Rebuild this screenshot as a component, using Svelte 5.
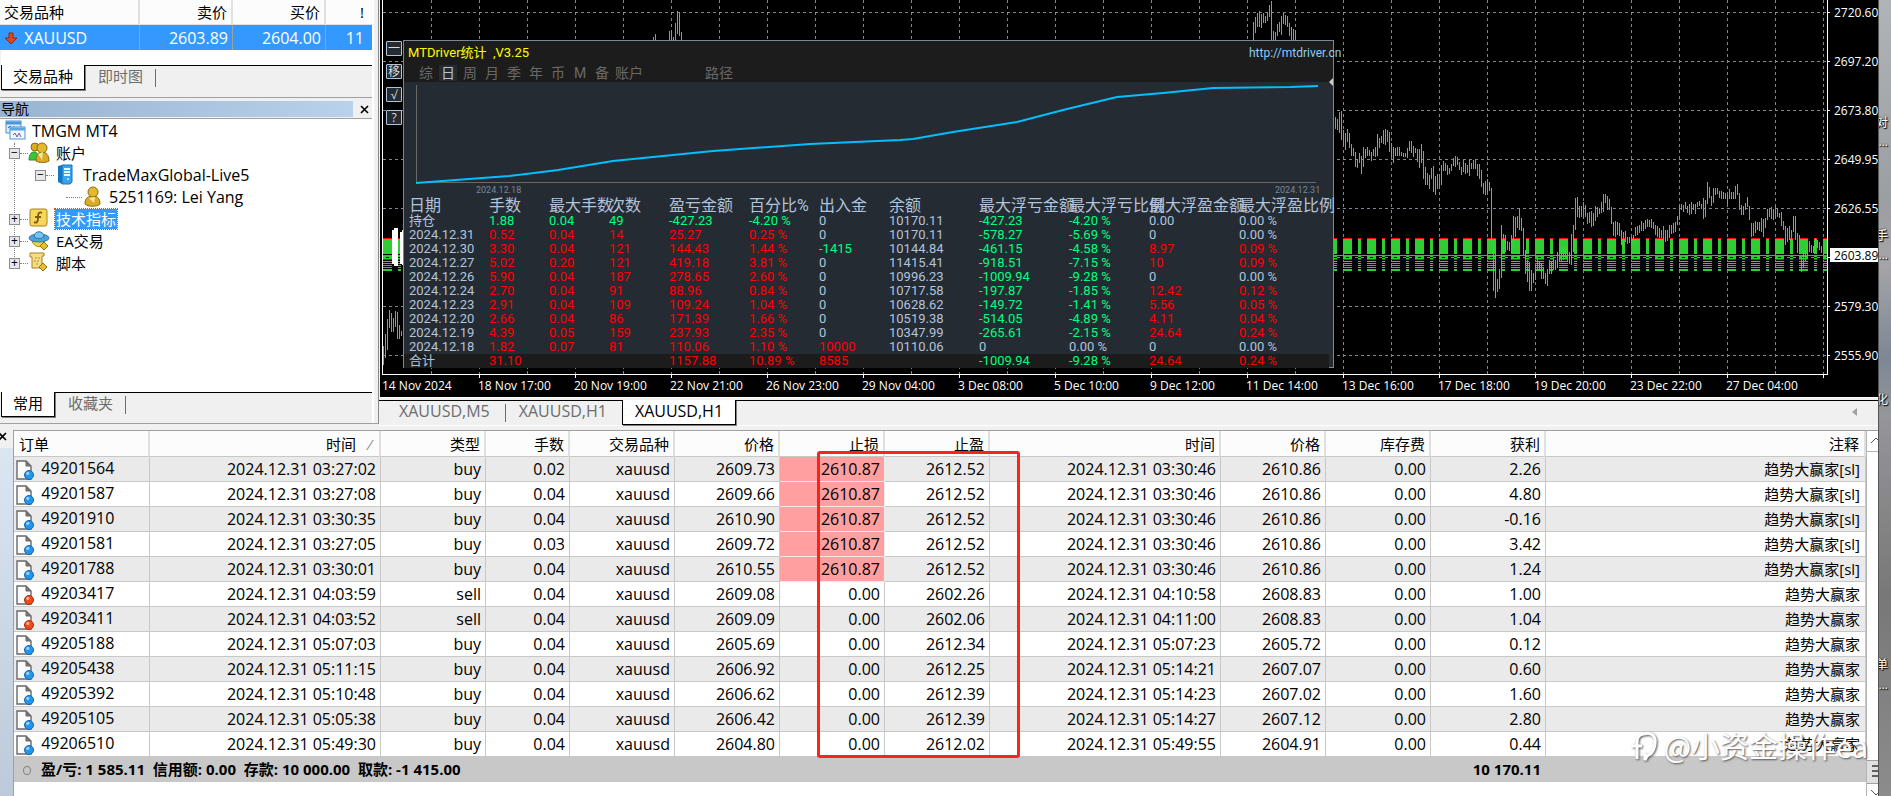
<script lang="ts">
	type Cell = string;

	const tree = [
		{ level: 0, icon: 'terminal', label: 'TMGM MT4', sign: '' },
		{ level: 1, icon: 'users', label: '账户', sign: '−' },
		{ level: 2, icon: 'server', label: 'TradeMaxGlobal-Live5', sign: '−' },
		{ level: 3, icon: 'user', label: '5251169: Lei Yang', sign: '' },
		{ level: 1, icon: 'func', label: '技术指标', sign: '+', selected: true },
		{ level: 1, icon: 'expert', label: 'EA交易', sign: '+' },
		{ level: 1, icon: 'script', label: '脚本', sign: '+' }
	];

	const times = [
		'14 Nov 2024', '18 Nov 17:00', '20 Nov 19:00', '22 Nov 21:00', '26 Nov 23:00',
		'29 Nov 04:00', '3 Dec 08:00', '5 Dec 10:00', '9 Dec 12:00', '11 Dec 14:00',
		'13 Dec 16:00', '17 Dec 18:00', '19 Dec 20:00', '23 Dec 22:00', '27 Dec 04:00'
	];
	const prices = ['2720.60', '2697.20', '2673.80', '2649.95', '2626.55', '', '2579.30', '2555.90'];
	const gridX = Array.from({ length: 30 }, (_, i) => 51 + i * 48);
	const gridY = prices.map((_, i) => 12 + i * 49);
	const orderLines = [256, 258, 261, 263, 265, 267, 269, 270];

	// high-low pairs, one bar every two pixels from x
	const series = [
		{ x: 3, bars: '346-365 334-358 319-350 310-328 313-332 318-332 311-327 312-339 325-339 331-336' },
		{ x: 273, bars: '37-40 34-40' },
		{ x: 289, bars: '31-40 30-40 37-40 23-40 11-34 12-36 32-40' },
		{ x: 873, bars: '22-40 17-33 13-27 11-27 14-28 13-23 16-23 13-21 5-17 1-40 31-40 32-40 24-36 22-32 16-35 13-24 15-25 16-27 23-36 27-40 29-40 30-40' },
		{
			x: 955,
			bars:
				'117-129 119-130 112-133 111-140 130-146 133-150 129-142 133-148 144-156 148-156 152-167 159-168 153-163 156-174 147-167 149-158 147-156 150-156 ' +
				'152-161 149-156 147-157 134-156 138-148 136-143 130-144 129-145 130-142 132-152 143-157 147-163 148-156 147-156 147-156 152-156 153-157 153-157 ' +
				'148-158 141-151 141-153 146-157 148-153 149-162 149-168 144-163 151-179 167-185 173-185 175-189 168-179 166-192 176-195 174-189 177-188 165-185 ' +
				'161-171 163-171 165-175 168-174 164-171 158-166 156-167 157-165 162-170 167-175 160-172 163-174 165-173 160-176 163-169 160-169 160-169 164-176 ' +
				'164-179 170-187 183-194 181-195 179-192 182-191 188-245 239-291 244-298 279-292 269-289 225-278 234-253 235-252 241-250 242-251 235-253 216-246 ' +
				'217-237 216-228 208-230 218-231 228-255 250-274 260-282 262-291 270-291 273-283 265-280 258-270 261-270 264-279 268-279 273-284 269-286 260-274 ' +
				'261-274 258-270 260-270 252-268 246-262 247-262 248-260 247-257 247-262 252-264 234-265 225-252 198-230 197-217 206-218 206-217 202-218 205-217 ' +
				'213-224 212-223 211-227 213-226 206-221 207-217 208-214 202-213 194-212 194-203 196-210 199-210 207-224 222-236 221-237 222-235 223-236 230-245 ' +
				'232-247 231-242 237-244 237-243 237-245 235-243 227-236 226-235 225-233 221-231 223-231 220-229 219-227 220-227 219-228 222-229 225-235 226-237 ' +
				'228-238 230-238 226-239 230-242 230-241 225-238 225-234 223-233 222-232 216-225 205-220 204-210 205-212 202-209 206-213 204-215 202-214 204-210 ' +
				'204-214 202-207 201-206 204-209 198-219 200-217 182-204 187-198 196-206 188-203 188-195 188-194 191-198 191-199 192-199 193-199 194-204 189-199 ' +
				'192-199 192-199 186-199 184-195 193-210 205-215 206-215 203-210 197-207 206-220 223-237 223-236 221-233 222-230 222-231 218-232 219-237 218-228 ' +
				'209-220 209-217 207-219 209-220 205-218 208-217 213-218 212-226 221-230 226-245 228-242 226-240 230-240 216-232 216-240 233-253 235-254 255-272 ' +
				'251-267 250-262 246-257 241-252 245-253 246-253 238-252 240-248 242-250 246-253'
		}
	];

	const candles = series
		.map((s) =>
			s.bars
				.split(' ')
				.map((b, i) => {
					const [high, low] = b.split('-');
					return `M${s.x + i * 2} ${high}V${low}`;
				})
				.join('')
		)
		.join('');

	const statTabs = ['综', '日', '周', '月', '季', '年', '币', 'M', '备', '账户'];
	const statHead = [
		'日期', '手数', '最大手数', '次数', '盈亏金额', '百分比%', '出入金', '余额',
		'最大浮亏金额', '最大浮亏比例', '最大浮盈金额', '最大浮盈比例'
	];
	const statRows: Cell[][] = [
		['持仓', '1.88', '0.04', '49', '-427.23', '-4.20 %', '0', '10170.11', '-427.23', '-4.20 %', '0.00', '0.00 %'],
		['2024.12.31', '0.52', '0.04', '14', '25.27', '0.25 %', '0', '10170.11', '-578.27', '-5.69 %', '0', '0.00 %'],
		['2024.12.30', '3.30', '0.04', '121', '144.43', '1.44 %', '-1415', '10144.84', '-461.15', '-4.58 %', '8.97', '0.09 %'],
		['2024.12.27', '5.02', '0.20', '121', '419.18', '3.81 %', '0', '11415.41', '-918.51', '-7.15 %', '10', '0.09 %'],
		['2024.12.26', '5.90', '0.04', '187', '278.65', '2.60 %', '0', '10996.23', '-1009.94', '-9.28 %', '0', '0.00 %'],
		['2024.12.24', '2.70', '0.04', '91', '88.96', '0.84 %', '0', '10717.58', '-197.87', '-1.85 %', '12.42', '0.12 %'],
		['2024.12.23', '2.91', '0.04', '109', '109.24', '1.04 %', '0', '10628.62', '-149.72', '-1.41 %', '5.56', '0.05 %'],
		['2024.12.20', '2.66', '0.04', '86', '171.39', '1.66 %', '0', '10519.38', '-514.05', '-4.89 %', '4.11', '0.04 %'],
		['2024.12.19', '4.39', '0.05', '159', '237.93', '2.35 %', '0', '10347.99', '-265.61', '-2.15 %', '24.64', '0.24 %'],
		['2024.12.18', '1.82', '0.07', '81', '110.06', '1.10 %', '10000', '10110.06', '0', '0.00 %', '0', '0.00 %'],
		['合计', '31.10', '', '', '1157.88', '10.89 %', '8585', '', '-1009.94', '-9.28 %', '24.64', '0.24 %']
	];

	function tone(value: string, col: number, row: number) {
		if (col === 0 || col === 7) return '';
		if (value.startsWith('-') || (row === 0 && col < 4)) return 'down';
		return parseFloat(value) > 0 ? 'up' : '';
	}

	const orderHead = ['订单', '时间', '类型', '手数', '交易品种', '价格', '止损', '止盈', '时间', '价格', '库存费', '获利', '注释'];
	const day = '2024.12.31 ';
	const orders = [
		['49201564', '03:27:02', 'buy', '0.02', '2609.73', '2610.87', '2612.52', '03:30:46', '2610.86', '2.26'],
		['49201587', '03:27:08', 'buy', '0.04', '2609.66', '2610.87', '2612.52', '03:30:46', '2610.86', '4.80'],
		['49201910', '03:30:35', 'buy', '0.04', '2610.90', '2610.87', '2612.52', '03:30:46', '2610.86', '-0.16'],
		['49201581', '03:27:05', 'buy', '0.03', '2609.72', '2610.87', '2612.52', '03:30:46', '2610.86', '3.42'],
		['49201788', '03:30:01', 'buy', '0.04', '2610.55', '2610.87', '2612.52', '03:30:46', '2610.86', '1.24'],
		['49203417', '04:03:59', 'sell', '0.04', '2609.08', '0.00', '2602.26', '04:10:58', '2608.83', '1.00'],
		['49203411', '04:03:52', 'sell', '0.04', '2609.09', '0.00', '2602.06', '04:11:00', '2608.83', '1.04'],
		['49205188', '05:07:03', 'buy', '0.04', '2605.69', '0.00', '2612.34', '05:07:23', '2605.72', '0.12'],
		['49205438', '05:11:15', 'buy', '0.04', '2606.92', '0.00', '2612.25', '05:14:21', '2607.07', '0.60'],
		['49205392', '05:10:48', 'buy', '0.04', '2606.62', '0.00', '2612.39', '05:14:23', '2607.02', '1.60'],
		['49205105', '05:05:38', 'buy', '0.04', '2606.42', '0.00', '2612.39', '05:14:27', '2607.12', '2.80'],
		['49206510', '05:49:30', 'buy', '0.04', '2604.80', '0.00', '2612.02', '05:49:55', '2604.91', '0.44']
	];
</script>

<div class="screen">
	<main class="app">
		<div class="top">
			<aside class="side">
				<table class="quotes">
					<thead>
						<tr><th>交易品种</th><th>卖价</th><th>买价</th><th>!</th></tr>
					</thead>
					<tbody>
						<tr>
							<td>
								<svg width="14" height="14" viewBox="0 0 14 14"><path d="M5 1h4v5h4l-6 6-6-6h4z" fill="#e8441c" stroke="#8c2410" /></svg>
								XAUUSD
							</td>
							<td>2603.89</td><td>2604.00</td><td>11</td>
						</tr>
					</tbody>
				</table>
				<div class="tabs quote-tabs">
					<button class="tab active">交易品种</button>
					<button class="tab">即时图</button>
				</div>
				<div class="nav-title">
					<span>导航</span>
					<button class="close" aria-label="关闭">
						<svg width="9" height="9" viewBox="0 0 9 9"><path d="M1 1l7 7M8 1L1 8" stroke="#000" stroke-width="1.6" /></svg>
					</button>
				</div>
				<ul class="tree">
					{#each tree as node}
						<li class="l{node.level}">
							{#if node.sign}<span class="box">{node.sign}</span><i class="dots"></i>{/if}
							{#if node.level === 3}<i class="dots long"></i>{/if}
							<svg width="22" height="22" viewBox="0 0 22 22">
								{#if node.icon === 'terminal'}
									<rect x="1" y="1" width="15" height="12" fill="#dcebfa" stroke="#4b96d8" />
									<path d="M1 3h15" stroke="#4b96d8" stroke-width="3" />
									<path d="M3 8l2-2 2 3 2-3" fill="none" stroke="#2d62b0" />
									<rect x="5" y="7" width="15" height="12" fill="#f2f8ff" stroke="#4b96d8" />
									<path d="M5 9h15" stroke="#5aa6e4" stroke-width="3" />
									<path d="M8 15l2-2 2 4 2-4 2 4" fill="none" stroke="#6b58b8" />
								{:else if node.icon === 'users'}
									<path d="M1 18c0-5 2-8 5-8s5 3 5 8z" fill="#35c93a" stroke="#268a28" />
									<circle cx="7" cy="5" r="4" fill="#d9ac20" stroke="#8c6b10" />
									<path d="M8 19c0-6 2-9 6-9s7 3 7 9c-3 2-10 2-13 0z" fill="#d9ac28" stroke="#8c6b10" />
									<circle cx="14" cy="6" r="5" fill="#e3b930" stroke="#8c6b10" />
									<path d="M10 12l4 6 1-8" fill="#fbe898" />
								{:else if node.icon === 'server'}
									<path d="M4 2l4-1v19l-4-2z" fill="#1577c4" />
									<path d="M8 1h10v17l-2 2H8z" fill="#35a6ee" stroke="#1a74b8" />
									<path d="M10 5h6M10 8h6M10 11h6" stroke="#e6f6ff" stroke-width="2" />
									<circle cx="14" cy="15" r="1" fill="#c8f5ff" />
								{:else if node.icon === 'user'}
									<path d="M3 18c0-6 3-8 8-8s7 3 7 8c-3 3-12 3-15 0z" fill="#d9ac28" stroke="#8c6b10" />
									<circle cx="11" cy="6" r="5" fill="#e3b930" stroke="#8c6b10" />
									<path d="M7 12l5 5 1-6" fill="#fbe898" />
								{:else if node.icon === 'func'}
									<rect x="2" y="1" width="17" height="17" rx="2" fill="#f7d75a" stroke="#a8821c" />
									<path d="M14 5c-4-2-4 2-4 5s-1 6-4 4M7 9h6" fill="none" stroke="#7c5a10" stroke-width="1.8" />
								{:else if node.icon === 'expert'}
									<path d="M4 11c2 6 8 7 11 4l2-5z" fill="#f3cf52" stroke="#a8821c" />
									<ellipse cx="11" cy="8" rx="10" ry="4" fill="#4ba3dc" stroke="#2a77ae" />
									<path d="M6 7c0-7 10-7 10 0-3 2-7 2-10 0z" fill="#7cc4ee" stroke="#2a77ae" />
									<path d="M16 12l4 4-4 4-4-4z" fill="#e9bc34" stroke="#94701a" />
								{:else}
									<path d="M2 1h14v3h-2v8l2 4H4V5H2z" fill="#f5dc86" stroke="#a8821c" />
									<path d="M7 6h5M6 9h5M8 12h3" stroke="#b58f30" stroke-dasharray="2 1" />
									<path d="M15 11l4 4-4 4-4-4z" fill="#e9bc34" stroke="#94701a" />
								{/if}
							</svg>
							<span class="label" class:selected={node.selected}>{node.label}</span>
						</li>
					{/each}
				</ul>
				<div class="tabs nav-tabs">
					<button class="tab active">常用</button>
					<button class="tab">收藏夹</button>
				</div>
			</aside>

			<section class="work">
				<div class="chart">
					<svg class="plot" height="397" shape-rendering="crispEdges">
						<g stroke="#778899" stroke-dasharray="3 3">
							{#each gridX as x}<path d="M{x}.5 0V374" />{/each}
							{#each gridY as y}<path d="M3 {y}.5H1447" />{/each}
						</g>
						<g stroke-dasharray="9 6 3 6">
							<path d="M3 246.5H1447" stroke="#32cd32" stroke-width="15" />
							<path d="M3 238.5H1447M3 259.5H1447" stroke="#f00" />
							{#each orderLines as y}<path d="M3 {y}.5H1447" stroke="#32cd32" />{/each}
						</g>
						<path d="M3 255.5H1447" stroke="#778899" />
						<path d={candles} transform="translate(0.5 0)" stroke="#0f0" />
						<path d="M13 230v34M15 228v38M17 228v38M21 232v32M23 230v35" stroke="#fff" stroke-width="2" />
						<path d="M2.5 0V374.5H1447.5V0" fill="none" stroke="#fff" />
						{#each gridX as x, i}
							<path d="M{x}.5 {i % 2 ? 374 : 371}v{i % 2 ? 4 : 3}" stroke={i % 2 ? '#fff' : '#778899'} />
						{/each}
						{#each times as t, i}<text x={2 + i * 96} y="390">{t}</text>{/each}
						{#each prices as p, i}
							<path d="M1447 {12 + i * 49}.5h3" stroke="#fff" />
							<text x="1454" y={17 + i * 49}>{p}</text>
						{/each}
						<rect x="1450" y="248" width="60" height="14" fill="#fff" />
						<text class="now" x="1454" y="260">2603.89</text>
					</svg>

					<div class="tools">
						<button>一</button>
						<button>移</button>
						<button>√</button>
						<button>?</button>
					</div>

					<div class="stat">
						<header>
							<div class="stat-title">
								<span>MTDriver统计 &nbsp;,V3.25</span>
								<a href="http://mtdriver.cn">http://mtdriver.cn</a>
							</div>
							<nav>
								{#each statTabs as t}<button class:on={t === '日'}>{t}</button>{/each}
								<button class="path">路径</button>
							</nav>
							<i class="grip"></i>
						</header>
						<svg class="curve" width="920" height="116">
							<path d="M12.5 3V100.5H912" fill="none" stroke="#696969" />
							<path
								d="M12 101L105 94L122 92L154 88L209 79L309 69L406 62L496 58L509 57L549 50L613 40L663 27L713 15L759 11L809 6L886 5L914 4"
								fill="none"
								stroke="#00bfff"
								stroke-width="2"
							/>
							<text x="72" y="111">2024.12.18</text>
							<text x="871" y="111">2024.12.31</text>
						</svg>
						<table class="stat-table">
							<thead>
								<tr>{#each statHead as h}<th>{h}</th>{/each}</tr>
							</thead>
							<tbody>
								{#each statRows as row, r}
									<tr class:total={r === 10}>
										{#each row as v, c}<td class={tone(v, c, r)}>{v}</td>{/each}
									</tr>
								{/each}
							</tbody>
						</table>
					</div>
				</div>
				<div class="tabs chart-tabs">
					<button class="tab">XAUUSD,M5</button>
					<button class="tab">XAUUSD,H1</button>
					<button class="tab active">XAUUSD,H1</button>
					<svg class="back" width="5" height="8" viewBox="0 0 5 8"><path d="M5 0v8L0 4z" fill="#a0a0a0" /></svg>
				</div>
			</section>
		</div>

		<section class="terminal">
			<div class="gutter">
				<button class="close" aria-label="关闭">
					<svg width="9" height="9" viewBox="0 0 9 9"><path d="M1 1l7 7M8 1L1 8" stroke="#000" stroke-width="1.6" /></svg>
				</button>
			</div>
			<div class="list">
				<table class="orders">
					<colgroup>
						<col class="w-id" /><col class="w-time" /><col class="w-std" /><col class="w-lot" /><col class="w-std" />
						<col class="w-std" /><col class="w-std" /><col class="w-std" /><col class="w-time" /><col class="w-std" />
						<col class="w-std" /><col class="w-profit" /><col />
					</colgroup>
					<thead>
						<tr>
							{#each orderHead as h, i}
								<th>{h}{#if i === 1}<span class="sort">⁄</span>{/if}</th>
							{/each}
						</tr>
					</thead>
					<tbody>
						{#each orders as o, i}
							<tr>
								<td>
									<svg width="20" height="21" viewBox="0 0 20 21">
										<path d="M2 1h9l5 5v13H2z" fill="#fafafa" stroke="#686868" stroke-width="1.4" />
										<path d="M11 1v5h5z" fill="#777" stroke="#686868" />
										<circle cx="14" cy="15" r="4.5" fill={o[2] === 'buy' ? '#2196ee' : '#ee4a1c'} stroke={o[2] === 'buy' ? '#1266ac' : '#a82c0c'} />
										<circle cx="12.8" cy="13.4" r="1.6" fill="#fff" opacity=".55" />
									</svg>
									{o[0]}
								</td>
								<td>{day}{o[1]}</td>
								<td>{o[2]}</td>
								<td>{o[3]}</td>
								<td>xauusd</td>
								<td>{o[4]}</td>
								<td class:hit={i < 5}>{o[5]}</td>
								<td>{o[6]}</td>
								<td>{day}{o[7]}</td>
								<td>{o[8]}</td>
								<td>0.00</td>
								<td>{o[9]}</td>
								<td class="note">趋势大赢家{i < 5 ? '[sl]' : ''}</td>
							</tr>
						{/each}
					</tbody>
					<tfoot>
						<tr>
							<td colspan="11">
								<i class="ring"></i>盈/亏: 1 585.11 &nbsp;信用额: 0.00 &nbsp;存款: 10 000.00 &nbsp;取款: -1 415.00
							</td>
							<td>10 170.11</td>
							<td></td>
						</tr>
					</tfoot>
				</table>
				<div class="mark"></div>
				<div class="watermark">
					<svg width="28" height="32" viewBox="0 0 28 32" fill="none" stroke="#fff" stroke-width="3">
						<path d="M2 17h10M7 30V13c0-6 3-8 7-8M14 5c8-3 12 3 11 10s-3 10-8 12l-2 4v-7" />
					</svg>
					@小资金操作ea
				</div>
			</div>
			<div class="scroll">
				<svg width="12" height="20" viewBox="0 0 12 20"><path d="M4 12l5-5 5 5" fill="none" stroke="#555" /></svg>
				<div class="thumb"><i></i><i></i><i></i></div>
				<svg width="12" height="12" viewBox="0 0 12 12"><path d="M4 6l5 5 5-5" fill="none" stroke="#555" /></svg>
			</div>
		</section>
	</main>

	<div class="desktop">
		<span class="d1">对</span>
		<span class="d2">...</span>
		<span class="d3">手</span>
		<span class="d4">...</span>
		<span class="d5">化</span>
		<span class="d6">单</span>
		<span class="d7">...</span>
	</div>
</div>

<style>
	:global(body) {
		overflow: hidden;
		background: #f0f0f0;
	}

	.screen {
		display: flex;
		height: 100vh;
		overflow: hidden;
		font-family: 'Open Sans', 'Noto Sans CJK SC', sans-serif;
		font-size: 15px;
		color: #000;
		white-space: nowrap;
	}

	button {
		font: inherit;
		padding: 0;
		margin: 0;
		border: 0;
		background: none;
		color: inherit;
	}

	table {
		border-collapse: separate;
		border-spacing: 0;
		table-layout: fixed;
		width: 100%;
	}

	th {
		font-weight: 400;
	}

	svg {
		display: block;
		flex: none;
	}

	.app {
		flex: 1;
		min-width: 0;
		display: flex;
		flex-direction: column;
		background: #f0f0f0;
	}

	.top {
		display: flex;
		height: 430px;
		flex: none;
	}

	/* left panels */
	.side {
		width: 372px;
		flex: none;
		display: flex;
		flex-direction: column;
		padding-right: 6px;
		border-right: 1px solid #8a8a8a;
		border-bottom: 1px solid #a0a0a0;
		height: 423px;
		background: linear-gradient(#fff, #fff) 372px 0 / 2px 100% no-repeat;
	}

	.quotes {
		background: #fff;
	}

	.quotes th,
	.quotes td {
		height: 25px;
		line-height: 24px;
		padding: 0 4px;
		box-sizing: border-box;
		text-align: right;
		border-right: 2px solid #e0e0e0;
	}

	.quotes th {
		background: #fcfcfc;
		border-bottom: 1px solid #e0e0e0;
	}

	.quotes td {
		font-size: 16px;
		color: #fff;
		background: #39f;
		border-right: 1px solid #a0a0a0;
	}

	.quotes th:first-child,
	.quotes td:first-child {
		width: 140px;
		text-align: left;
	}

	.quotes td:first-child svg {
		display: inline-block;
		vertical-align: -2px;
		margin-right: 2px;
	}

	.quotes th:nth-child(2),
	.quotes th:nth-child(3) {
		width: 93px;
	}

	.quotes th:last-child,
	.quotes td:last-child {
		border-right: 0;
		padding-right: 8px;
	}

	.tabs {
		position: relative;
		display: flex;
		height: 25px;
		color: #6d6d6d;
		box-shadow: inset 0 1px #000;
	}

	.tab {
		position: relative;
		height: 25px;
		padding: 0 13px;
		line-height: 23px;
		display: flex;
	}

	.tab:not(.active)::after {
		content: '';
		position: absolute;
		right: 0;
		top: 4px;
		height: 18px;
		border-right: 1px solid #6d6d6d;
	}

	.tab.active {
		color: #000;
		background: #fff;
		border: 1px solid #000;
		border-top: 0;
		box-shadow: 1px 1px #808080;
		padding: 0 11px;
	}

	.quote-tabs {
		margin-top: 15px;
		margin-left: 1px;
		box-shadow: inset 0 1px #000, 0 -15px #fff;
	}

	.nav-title {
		display: flex;
		align-items: center;
		height: 16px;
		margin-top: 7px;
		padding-top: 3px;
		padding-bottom: 1px;
		border-top: 1px solid #a0a0a0;
		border-bottom: 1px solid #a0a0a0;
	}

	.nav-title span {
		flex: 1;
		height: 16px;
		line-height: 16px;
		padding-left: 1px;
		font-size: 14px;
		background: linear-gradient(90deg, #99b4d1, #b9d1ea);
	}

	.nav-title .close {
		margin: 0 3px 0 7px;
	}

	.tree {
		position: relative;
		list-style: none;
		flex: 1;
		margin: 0;
		padding: 1px 0 0;
		background: #fff;
		font-size: 16px;
	}

	.tree::before {
		content: '';
		position: absolute;
		left: 14px;
		top: 24px;
		height: 122px;
		border-left: 1px dotted #808080;
	}

	.tree li {
		position: relative;
		display: flex;
		align-items: center;
		height: 22px;
	}

	.tree .l0 {
		padding-left: 5px;
	}

	.tree .l1 {
		padding-left: 9px;
	}

	.tree .l2 {
		padding-left: 35px;
	}

	.tree .l3 {
		padding-left: 66px;
	}

	.box {
		width: 9px;
		height: 9px;
		line-height: 8px;
		font-size: 12px;
		text-align: center;
		border: 1px solid #8c8c8c;
		background: #e8e8e8;
	}

	.dots {
		width: 8px;
		border-top: 1px dotted #808080;
	}

	.dots.long {
		width: 16px;
	}

	.label {
		margin-left: 5px;
		line-height: 20px;
	}

	.l1 .label {
		padding: 0 1px;
		font-size: 15px;
	}

	.l2 .label {
		margin-left: 7px;
	}

	.selected {
		color: #fff;
		background: #39f;
		outline: 1px dotted #c06000;
	}

	.nav-tabs {
		margin: 0 0 6px 1px;
	}

	/* chart window */
	.work {
		flex: 1;
		min-width: 0;
		display: flex;
		flex-direction: column;
	}

	.chart {
		position: relative;
		height: 397px;
		margin-left: 1px;
		background: #000;
		border-bottom: 1px solid #fff;
	}

	.plot {
		width: 100%;
	}

	.plot text {
		font-size: 12px;
		fill: #fff;
	}

	.plot .now {
		fill: #000;
	}

	.tools {
		position: absolute;
		left: 6px;
		top: 41px;
		display: flex;
		flex-direction: column;
		gap: 8px;
	}

	.tools button {
		width: 16px;
		height: 15px;
		line-height: 12px;
		font-size: 12px;
		overflow: hidden;
		color: #dcdcdc;
		background: #252b33;
		border: 1px solid #b0c4de;
		border-radius: 1px;
	}

	.stat {
		position: absolute;
		left: 23px;
		top: 40px;
		width: 929px;
		height: 326px;
		border: 1px solid #778899;
		background: #252b33;
		color: #b0c4de;
		font-family: Roboto, 'Noto Sans CJK SC', sans-serif;
	}

	.stat header {
		position: relative;
		height: 41px;
		background: #1c1c1c;
	}

	.stat-title {
		display: flex;
		justify-content: space-between;
		height: 24px;
		padding-left: 4px;
		line-height: 24px;
		font-size: 13px;
		color: #ff0;
	}

	.stat-title a {
		width: 84px;
		color: #87cefa;
		font-size: 12px;
		text-decoration: none;
	}

	.stat nav {
		display: flex;
		padding-left: 11px;
	}

	.stat nav button {
		min-width: 18px;
		height: 16px;
		margin: 0 2px;
		line-height: 16px;
		font-size: 14px;
		color: #696969;
	}

	.stat nav .on {
		color: #b0c4de;
		background: #252b33;
	}

	.stat nav .path {
		margin-left: 60px;
	}

	.grip {
		position: absolute;
		right: 0;
		bottom: -4px;
		border: 4px solid transparent;
		border-left: 0;
		border-right-color: #ccc;
	}

	.curve {
		height: 116px;
	}

	.curve text {
		font-size: 9px;
		fill: #778899;
	}

	.stat-table {
		width: 925px;
	}

	.stat-table th,
	.stat-table td {
		box-sizing: border-box;
		padding: 0 0 0 5px;
		text-align: left;
		font-size: 13px;
		line-height: 14px;
		height: 14px;
	}

	.stat-table th {
		font-size: 16px;
		line-height: 16px;
		height: 16px;
	}

	.stat-table th:nth-child(2),
	.stat-table th:nth-child(3),
	.stat-table th:nth-child(4) {
		width: 60px;
	}

	.stat-table th:nth-child(1),
	.stat-table th:nth-child(5),
	.stat-table th:nth-child(10) {
		width: 80px;
	}

	.stat-table th:nth-child(6),
	.stat-table th:nth-child(7) {
		width: 70px;
	}

	.stat-table th:nth-child(8),
	.stat-table th:nth-child(9),
	.stat-table th:nth-child(11) {
		width: 90px;
	}

	.stat-table .up {
		color: #f00;
	}

	.stat-table .down {
		color: #00ff7f;
	}

	.total td {
		background: #1c1c1c;
	}

	.chart-tabs {
		margin-top: 2px;
		padding-left: 6px;
		font-size: 16px;
		border-bottom: 1px solid #fff;
	}

	.chart-tabs .tab:first-child {
		padding: 0 16px 0 14px;
	}

	.chart-tabs .tab:nth-child(2)::after {
		display: none;
	}

	.chart-tabs .tab.active {
		padding: 0 12px;
		margin-left: 2px;
	}

	.back {
		margin: 8px 21px 0 auto;
	}

	/* terminal */
	.terminal {
		flex: 1;
		min-height: 0;
		display: flex;
	}

	.gutter {
		width: 14px;
		flex: none;
		background: linear-gradient(#f0f0f0 18px, #dbe6f3 18px, #bccad9);
		border-right: 1px solid #a0a0a0;
		box-sizing: border-box;
	}

	.gutter .close {
		display: block;
		margin: 2px 0 0 -2px;
	}

	.list {
		position: relative;
		flex: 1;
		min-width: 0;
		background: #fff;
		border-top: 1px solid #a0a0a0;
	}

	.w-id {
		width: 136px;
	}

	.w-time {
		width: 231px;
	}

	.w-std {
		width: 105px;
	}

	.w-lot {
		width: 84px;
	}

	.w-profit {
		width: 115px;
	}

	.orders th {
		height: 26px;
		box-sizing: border-box;
		padding: 0 4px 0 5px;
		line-height: 22px;
		text-align: right;
		background: #fcfcfc;
		border-right: 2px solid #e0e0e0;
		border-bottom: 1px solid #c8c8c8;
	}

	.orders th:first-child {
		text-align: left;
	}

	.sort {
		margin: 0 4px 0 13px;
		color: #808080;
	}

	.orders td {
		height: 25px;
		box-sizing: border-box;
		padding: 0 4px 0 0;
		line-height: 22px;
		font-size: 16px;
		text-align: right;
		border-right: 1px solid #c8c8c8;
		border-bottom: 1px solid #c8c8c8;
	}

	.orders tbody tr:nth-child(odd) td {
		background: #eaeaea;
	}

	.orders tbody td:first-child {
		text-align: left;
		padding-left: 1px;
	}

	.orders td:first-child svg {
		display: inline-block;
		vertical-align: middle;
		margin-right: 2px;
	}

	.orders tbody tr td.hit,
	.orders tbody tr:nth-child(odd) td.hit {
		background: #ff9f9f;
		border-color: #eaeaea;
	}

	.orders tbody td.note,
	.orders th:last-child {
		font-size: 15px;
		padding-right: 5px;
	}

	.orders tfoot td {
		background: #c8c8c8;
		border-color: #c8c8c8;
		font-size: 15px;
		font-weight: 700;
	}

	.orders tfoot td:first-child {
		text-align: left;
	}

	.ring {
		display: inline-block;
		width: 6px;
		height: 7px;
		margin: 0 10px 0 9px;
		border: 1px solid #808080;
		border-radius: 50%;
	}

	.mark {
		position: absolute;
		left: 803px;
		top: 20px;
		width: 197px;
		height: 301px;
		border: 3px solid #fb2418;
		border-radius: 3px;
	}

	.watermark {
		position: absolute;
		right: -2px;
		bottom: 33px;
		display: flex;
		align-items: center;
		gap: 6px;
		font-size: 29px;
		line-height: 36px;
		color: #fff;
		text-shadow: 1px 1px 2px #555;
		font-family: 'Noto Sans CJK SC', sans-serif;
	}

	.watermark svg {
		filter: drop-shadow(1px 1px 1px #555);
	}

	.scroll {
		width: 11px;
		flex: none;
		display: flex;
		flex-direction: column;
		overflow: hidden;
		background: #fff;
		border-left: 1px solid #b4b4b4;
		border-top: 1px solid #a0a0a0;
	}

	.scroll > svg:first-child {
		border-bottom: 1px solid #b4b4b4;
	}

	.thumb {
		margin-top: auto;
		padding: 4px 0 3px 5px;
		background: #e0e0e0;
		border: solid #a0a0a0;
		border-width: 1px 0;
	}

	.thumb i {
		display: block;
		height: 2px;
		margin-bottom: 3px;
		background: #606060;
	}

	/* strip of desktop behind the window */
	.desktop {
		position: relative;
		width: 12px;
		flex: none;
		overflow: hidden;
		border-left: 1px solid #555;
		background: linear-gradient(#b0b3b7, #9b9ea3 25%, #a5a5a9 33%, #7d8795 45%, #94969a 52%, #787878 75%, #8c8c8c);
		font-size: 12px;
		color: #fff;
		text-shadow: 1px 1px 1px #000, 0 0 2px #000;
	}

	.desktop span {
		position: absolute;
		right: 3px;
	}

	.d1 {
		top: 113px;
	}

	.d2 {
		top: 133px;
	}

	.d3 {
		top: 226px;
	}

	.d4 {
		top: 246px;
	}

	.d5 {
		top: 390px;
	}

	.d6 {
		top: 655px;
	}

	.d7 {
		top: 676px;
	}
</style>
